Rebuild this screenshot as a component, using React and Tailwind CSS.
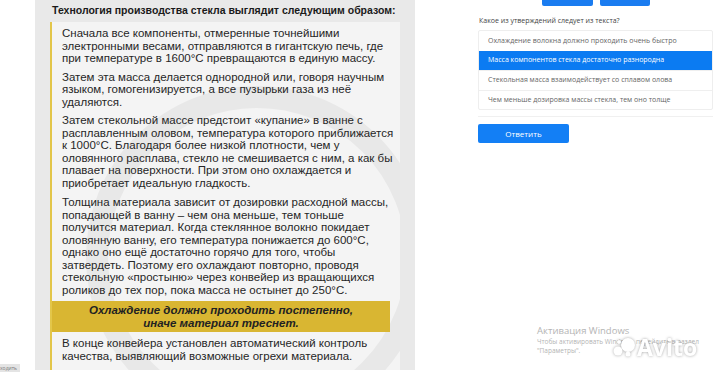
import React from 'react';

const slideFont = { fontFamily: '"Liberation Sans", Arial, sans-serif' };
const uiFont = { fontFamily: '"Open Sans", "Noto Sans", sans-serif' };

const options = [
    'Охлаждение волокна должно проходить очень быстро',
    'Масса компонентов стекла достаточно разнородна',
    'Стекольная масса взаимодействует со сплавом олова',
    'Чем меньше дозировка массы стекла, тем оно толще',
];

const SlidePanel = () => (
    <div className="w-[380px] h-[370px] bg-[#e9e9e9] pl-[15px] pr-[15px] flex flex-col" style={slideFont}>
        <div className="h-[22px] pl-[2px] pt-[3px] text-[10.5px] font-bold text-[#1a1a1a] whitespace-nowrap">
            Технология производства стекла выглядит следующим образом:
        </div>
        <div className="relative flex-1 bg-[#f4f4f4] border-l-2 border-[#e3c64a] overflow-hidden">
            {/* faint ring from the original slide */}
            <svg className="absolute left-0 top-0" width="350" height="350">
                <circle cx="205" cy="235" r="160" fill="none" stroke="#e8e8e8" strokeWidth="22" />
            </svg>
            <div className="relative text-[11.5px] leading-[12.5px] text-[#262626]">
                <div className="pl-[10px] pr-[4px] pt-[5px]">
                    <p>Сначала все компоненты, отмеренные точнейшими<br />электронными весами, отправляются в гигантскую печь, где<br />при температуре в 1600°С превращаются в единую массу.</p>
                    <p className="mt-[6px]">Затем эта масса делается однородной или, говоря научным<br />языком, гомогенизируется, а все пузырьки газа из неё<br />удаляются.</p>
                    <p className="mt-[6px]">Затем стекольной массе предстоит «купание» в ванне с<br />расплавленным оловом, температура которого приближается<br />к 1000°С. Благодаря более низкой плотности, чем у<br />оловянного расплава, стекло не смешивается с ним, а как бы<br />плавает на поверхности. При этом оно охлаждается и<br />приобретает идеальную гладкость.</p>
                    <p className="mt-[7px]">Толщина материала зависит от дозировки расходной массы,<br />попадающей в ванну – чем она меньше, тем тоньше<br />получится материал. Когда стеклянное волокно покидает<br />оловянную ванну, его температура понижается до 600°С,<br />однако оно ещё достаточно горячо для того, чтобы<br />затвердеть. Поэтому его охлаждают повторно, проводя<br />стекольную «простыню» через конвейер из вращающихся<br />роликов до тех пор, пока масса не остынет до 250°С.</p>
                </div>
                <div className="mt-[5px] mr-[10px] bg-[#d9b632] py-[3px] text-center font-bold italic text-[#222]">
                    Охлаждение должно проходить постепенно,<br />иначе материал треснет.
                </div>
                <p className="pl-[10px] pt-[5px]">В конце конвейера установлен автоматический контроль<br />качества, выявляющий возможные огрехи материала.</p>
            </div>
        </div>
    </div>
);

const QuizPanel = () => (
    <div className="w-[235px] ml-[63px] flex flex-col" style={uiFont}>
        <div className="flex justify-center gap-[7px] -mt-[12px]">
            <div className="w-[51px] h-[18px] rounded-[2px] bg-[#1a7cf0]" />
            <div className="w-[50px] h-[18px] rounded-[2px] bg-[#1a7cf0]" />
        </div>
        <div className="mt-[10px] pl-[1px] text-[7px] leading-[10px] text-[#444]">Какое из утверждений следует из текста?</div>
        <div className="mt-[4px] border border-[#eeeeee] rounded-[2px] flex flex-col">
            {options.map((text, i) => (
                <div
                    key={i}
                    className={`h-[19.5px] flex items-center pl-[9px] text-[7px] ${i === 1 ? 'bg-[#0b7bf2] text-white' : 'text-[#666]'} ${i > 1 ? 'border-t border-[#efefef]' : ''}`}
                >
                    {text}
                </div>
            ))}
        </div>
        <div className="mt-[6px] h-px bg-[#f0f0f0]" />
        <button className="mt-[7px] w-[91px] h-[19px] rounded-[2px] bg-[#137ff5] text-white text-[8px] flex items-center justify-center">
            Ответить
        </button>
    </div>
);

const App = () => {
    return (
        <div className="relative w-[720px] h-[372px] bg-white overflow-hidden flex">
            <div className="w-[35px] h-full flex flex-col justify-end">
                <div className="w-[20px] h-[8px] bg-[#e4e4e4] text-[5px] leading-[8px] text-[#777] overflow-hidden" style={uiFont}>ходить</div>
            </div>
            <SlidePanel />
            <QuizPanel />

            {/* windows activation watermark */}
            <div className="absolute left-[537px] top-[324px] text-[#b4b4b4]" style={uiFont}>
                <div className="text-[9.5px] leading-[13px]">Активация Windows</div>
                <div className="text-[6.5px] leading-[9px]">Чтобы активировать Windows, перейдите в раздел</div>
                <div className="text-[6.5px] leading-[9px]">"Параметры".</div>
            </div>

            {/* avito watermark */}
            <div className="absolute left-[613px] top-[335px] flex items-center gap-[2px]" style={{ filter: 'drop-shadow(0 0 1.5px rgba(0,0,0,0.35))' }}>
                <svg width="22" height="20" viewBox="0 0 22 20">
                    <circle cx="15" cy="8" r="7" fill="#ffffff" />
                    <circle cx="5" cy="14" r="4.5" fill="#ffffff" />
                    <circle cx="15" cy="17" r="2.5" fill="#ffffff" />
                    <circle cx="6" cy="5" r="2" fill="#ffffff" />
                </svg>
                <span className="text-[23px] leading-[24px] font-bold text-white" style={{ fontFamily: '"Open Sans", sans-serif' }}>Avito</span>
            </div>
        </div>
    );
};

export default App;
